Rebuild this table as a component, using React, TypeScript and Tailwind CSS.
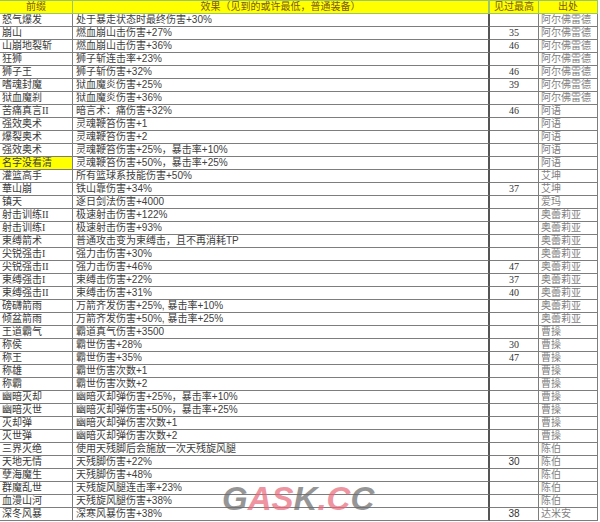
import React from "react";

type Row = { a: string; b: string; c?: string; d: string; hl?: boolean; sans?: boolean };

const rows: Row[] = [
  { a: "怒气爆发", b: "处于暴走状态时最终伤害+30%", d: "阿尔佛雷德" },
  { a: "崩山", b: "燃血崩山击伤害+27%", c: "35", d: "阿尔佛雷德" },
  { a: "山崩地裂斩", b: "燃血崩山击伤害+36%", c: "46", d: "阿尔佛雷德" },
  { a: "狂狮", b: "狮子斩连击率+23%", d: "阿尔佛雷德" },
  { a: "狮子王", b: "狮子斩伤害+32%", c: "46", d: "阿尔佛雷德" },
  { a: "嗜魂封魔", b: "狱血魔炎伤害+25%", c: "39", d: "阿尔佛雷德" },
  { a: "狱血魔刹", b: "狱血魔炎伤害+36%", d: "阿尔佛雷德" },
  { a: "苦痛真言II", b: "暗言术：痛伤害+32%", c: "46", d: "阿语" },
  { a: "强效奥术", b: "灵魂鞭笞伤害+1", d: "阿语" },
  { a: "爆裂奥术", b: "灵魂鞭笞伤害+2", d: "阿语" },
  { a: "强效奥术", b: "灵魂鞭笞伤害+25%，暴击率+10%", d: "阿语" },
  { a: "名字没看清", b: "灵魂鞭笞伤害+50%，暴击率+25%", d: "阿语", hl: true },
  { a: "灌篮高手", b: "所有篮球系技能伤害+50%", d: "艾坤" },
  { a: "華山崩", b: "铁山靠伤害+34%", c: "37", d: "艾坤" },
  { a: "镇天", b: "逐日剑法伤害+4000", d: "爱玛" },
  { a: "射击训练II", b: "极速射击伤害+122%", d: "奥蕾莉亚" },
  { a: "射击训练I", b: "极速射击伤害+93%", d: "奥蕾莉亚" },
  { a: "束缚箭术", b: "普通攻击变为束缚击，且不再消耗TP", d: "奥蕾莉亚" },
  { a: "尖锐强击I", b: "强力击伤害+30%", d: "奥蕾莉亚" },
  { a: "尖锐强击II", b: "强力击伤害+46%", c: "47", d: "奥蕾莉亚" },
  { a: "束缚强击I", b: "束缚击伤害+22%", c: "37", d: "奥蕾莉亚" },
  { a: "束缚强击II", b: "束缚击伤害+31%", c: "40", d: "奥蕾莉亚" },
  { a: "磅礴箭雨", b: "万箭齐发伤害+25%, 暴击率+10%", d: "奥蕾莉亚" },
  { a: "倾盆箭雨", b: "万箭齐发伤害+50%, 暴击率+25%", d: "奥蕾莉亚" },
  { a: "王道霸气", b: "霸道真气伤害+3500", d: "曹操" },
  { a: "称侯", b: "霸世伤害+28%", c: "30", d: "曹操" },
  { a: "称王", b: "霸世伤害+35%", c: "47", d: "曹操" },
  { a: "称雄", b: "霸世伤害次数+1", d: "曹操" },
  { a: "称霸", b: "霸世伤害次数+2", d: "曹操" },
  { a: "幽暗灭却", b: "幽暗灭却弹伤害+25%，暴击率+10%", d: "曹操" },
  { a: "幽暗灭世", b: "幽暗灭却弹伤害+50%，暴击率+25%", d: "曹操" },
  { a: "灭却弹", b: "幽暗灭却弹伤害次数+1", d: "曹操" },
  { a: "灭世弹", b: "幽暗灭却弹伤害次数+2", d: "曹操" },
  { a: "三界灭绝", b: "使用天残脚后会施放一次天残旋风腿", d: "陈伯" },
  { a: "天地无情", b: "天残脚伤害+22%", c: "30", d: "陈伯", sans: true },
  { a: "孽海魔生", b: "天残脚伤害+48%", d: "陈伯" },
  { a: "群魔乱世", b: "天残旋风腿连击率+23%", d: "陈伯" },
  { a: "血漫山河", b: "天残旋风腿伤害+38%", d: "陈伯" },
  { a: "深冬风暴", b: "深寒风暴伤害+38%", c: "38", d: "达米安", sans: true },
];

const font = { fontFamily: '"Liberation Serif", "Noto Sans CJK SC", serif' };

export default function App() {
  return (
    <div className="relative w-[600px] h-[522px] bg-white overflow-hidden" style={font}>
      <div className="grid grid-cols-[73px_417px_49px_59px] text-[10px] leading-[12px]">
        <div className="h-[14px] bg-[#ffff00] border-t border-b border-r border-[#9cc46a] text-[#7a5a10] text-center">前缀</div>
        <div className="h-[14px] bg-[#ffff00] border-t border-b border-r-2 border-[#9cc46a] text-[#7a5a10] text-center">效果（见到的或许最低，普通装备）</div>
        <div className="h-[14px] bg-[#ffff00] border-t border-b border-r border-[#9cc46a] text-[#7a5a10] text-center">见过最高</div>
        <div className="h-[14px] bg-[#ffff00] border-t border-b border-r border-[#9cc46a] text-[#7a5a10] text-center">出处</div>
        {rows.map((r, i) => (
          <React.Fragment key={i}>
            <div className={`h-[13px] border-b border-r border-[#7d7d7d] pl-[2px] text-[#3a3a3a] whitespace-nowrap overflow-hidden ${r.hl ? "bg-[#ffff00]" : ""}`}>{r.a}</div>
            <div className="h-[13px] border-b border-r-2 border-b-[#7d7d7d] border-r-[#555555] pl-[3px] text-[#404040] whitespace-nowrap overflow-hidden" style={{ fontFamily: '"Liberation Sans", "Noto Sans CJK SC", sans-serif' }}>{r.b}</div>
            <div className="h-[13px] border-b border-r border-[#7d7d7d] text-center text-[#333333]" style={r.sans ? { fontFamily: '"Liberation Sans", sans-serif' } : undefined}>{r.c ?? ""}</div>
            <div className="h-[13px] border-b border-r border-[#7d7d7d] pl-[2px] text-[#7f7f7f] whitespace-nowrap overflow-hidden">{r.d}</div>
          </React.Fragment>
        ))}
      </div>
      <div
        className="absolute left-[222px] top-[484px] text-[33px] leading-[30px] font-black italic tracking-[0px] opacity-70 select-none"
        style={{ fontFamily: '"Liberation Sans", sans-serif' }}
      >
        <span className="text-[#6b6b6b]">G</span>
        <span className="text-[#e8697a]">A</span>
        <span className="text-[#e8697a]">S</span>
        <span className="text-[#6b6b6b]">K</span>
        <span className="text-[#e8697a]">.</span>
        <span className="text-[#e8697a]">C</span>
        <span className="text-[#6b6b6b]">C</span>
      </div>
    </div>
  );
}
